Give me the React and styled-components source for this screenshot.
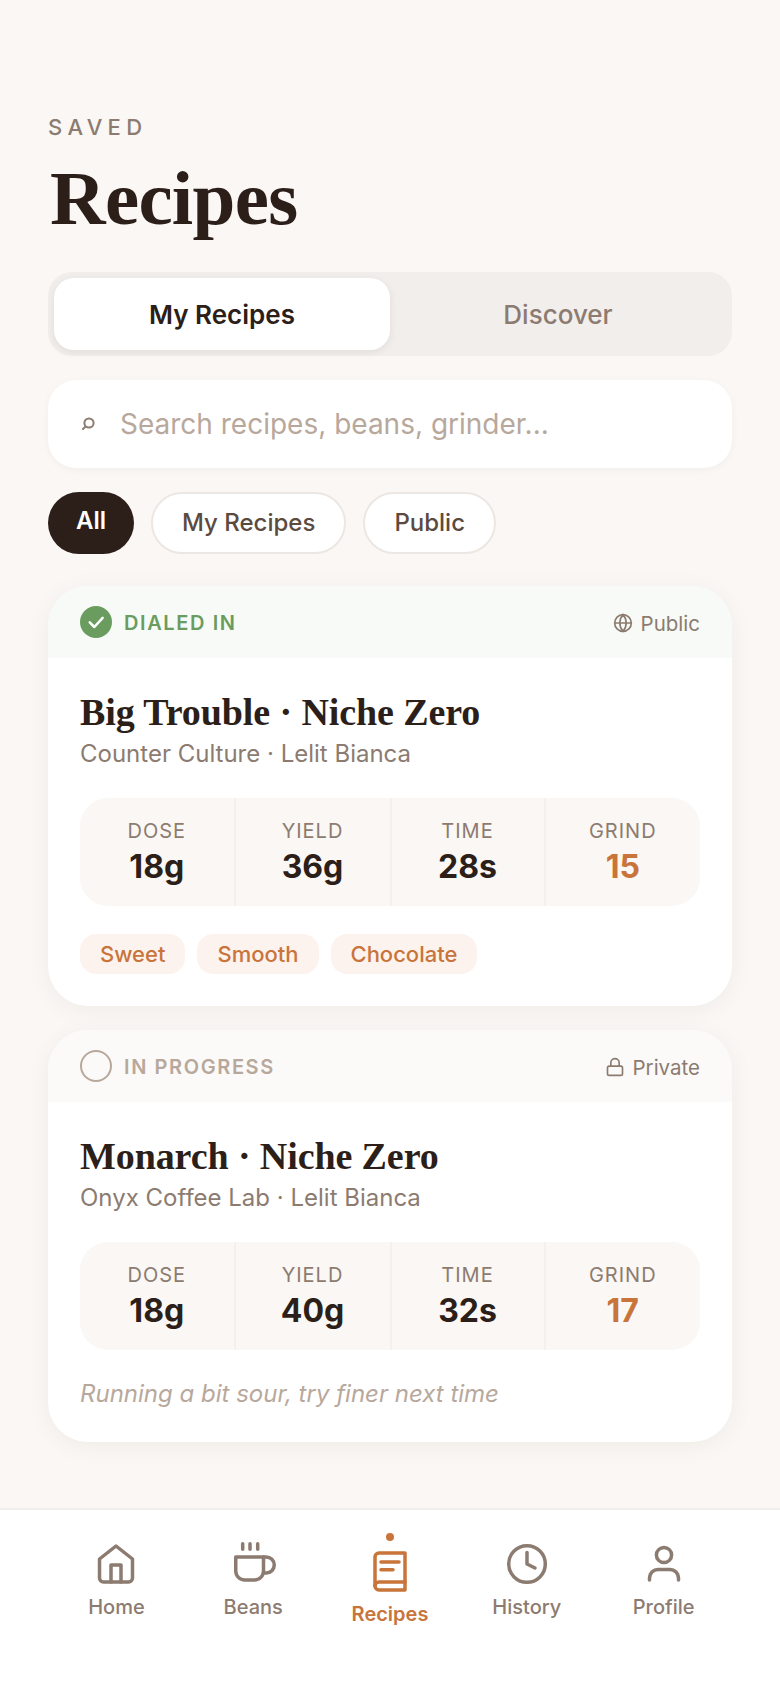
import React from 'react'
import styled, { createGlobalStyle } from 'styled-components'

const dark = '#2c1e18'
const muted = '#8c7b70'
const faint = '#b8a89c'
const accent = '#c8743a'
const green = '#6a9c5f'
const paper = '#faf7f4'

const Global = createGlobalStyle`
  * { box-sizing: border-box; }
  body { margin: 0; background: ${paper}; font-family: Inter, "Liberation Sans", sans-serif; }
`
const Page = styled.div`
  min-height: 100vh;
  display: flex;
  flex-direction: column;
  background: ${paper};
`
const Main = styled.main`
  flex: 1;
  padding: 113px 48px 0;
`
const Eyebrow = styled.div`
  font-size: 22px;
  line-height: 28px;
  font-weight: 500;
  letter-spacing: 5.3px;
  color: ${muted};
`
const PageTitle = styled.h1`
  margin: 13px 0 30px 2px;
  font-family: "Liberation Serif", serif;
  font-size: 77px;
  line-height: 88px;
  font-weight: 700;
  letter-spacing: -0.7px;
  color: ${dark};
`
const Tabs = styled.div`
  display: grid;
  grid-template-columns: 1fr 1fr;
  height: 84px;
  padding: 6px;
  border-radius: 24px;
  background: #f2eeeb;
`
const Tab = styled.div`
  display: flex;
  align-items: center;
  justify-content: center;
  font-size: 26px;
  border-radius: 20px;
  font-weight: ${p => (p.$active ? 600 : 500)};
  color: ${p => (p.$active ? dark : muted)};
  background: ${p => (p.$active ? '#fff' : 'transparent')};
  box-shadow: ${p => (p.$active ? '0 2px 8px rgba(44,30,24,.08)' : 'none')};
`
const Search = styled.div`
  display: flex;
  align-items: center;
  gap: 24px;
  height: 88px;
  margin-top: 24px;
  padding: 0 32px;
  border-radius: 28px;
  background: #fff;
  box-shadow: 0 2px 8px rgba(44,30,24,.04);
`
const SearchInput = styled.input`
  flex: 1;
  min-width: 0;
  border: none;
  outline: none;
  padding: 0;
  background: transparent;
  font-family: inherit;
  font-size: 28px;
  color: ${dark};
  &::placeholder { color: ${faint}; opacity: 1; }
`
const Chips = styled.div`
  display: flex;
  gap: 17px;
  margin: 24px 0 32px;
`
const Chip = styled.div`
  padding: 14px ${p => (p.$active ? '28px' : '29px')};
  border-radius: 32px;
  font-size: 24px;
  line-height: 30px;
  font-weight: ${p => (p.$active ? 600 : 500)};
  color: ${p => (p.$active ? '#fff' : '#5c4a3f')};
  background: ${p => (p.$active ? dark : '#fff')};
  border: ${p => (p.$active ? 'none' : '2px solid #ece7e3')};
`
const Cards = styled.div`
  display: flex;
  flex-direction: column;
  gap: 24px;
`
const Card = styled.article`
  border-radius: 40px;
  background: #fff;
  overflow: hidden;
  box-shadow: 0 4px 24px rgba(44,30,24,.05);
`
const StatusBar = styled.div`
  display: flex;
  align-items: center;
  justify-content: space-between;
  height: 72px;
  padding: 2px 32px 0;
  background: ${p => (p.$done ? '#f7faf6' : '#fbfaf8')};
`
const Status = styled.div`
  display: flex;
  align-items: center;
  gap: 12px;
  font-size: 20px;
  font-weight: 600;
  letter-spacing: 1.6px;
  color: ${p => (p.$done ? green : faint)};
`
const StatusDot = styled.span`
  display: flex;
  align-items: center;
  justify-content: center;
  width: 32px;
  height: 32px;
  margin-top: -2px;
  border-radius: 50%;
  background: ${p => (p.$done ? green : 'transparent')};
  border: ${p => (p.$done ? 'none' : `2px solid ${faint}`)};
`
const Visibility = styled.div`
  display: flex;
  align-items: center;
  gap: 8px;
  font-size: 20.5px;
  color: ${muted};
`
const CardBody = styled.div`
  padding: 31px 32px 32px;
`
const CardTitle = styled.h2`
  margin: 0 0 4px;
  font-family: "Liberation Serif", serif;
  font-size: 38px;
  line-height: 46px;
  font-weight: 700;
  letter-spacing: -0.1px;
  color: ${dark};
`
const Sub = styled.div`
  font-size: 24px;
  line-height: 30px;
  color: ${muted};
`
const Stats = styled.div`
  display: grid;
  grid-template-columns: 155.5px 156px 154px 154.5px;
  margin-top: 29px;
  border-radius: 28px;
  background: ${paper};
`
const Stat = styled.div`
  display: flex;
  flex-direction: column;
  align-items: center;
  gap: 5px;
  padding: 21px 0 20px;
  border-right: 2px solid #f4f0ed;
  &:last-child { border-right: none; }
`
const StatLabel = styled.div`
  font-size: 20px;
  line-height: 24px;
  letter-spacing: 1px;
  color: ${muted};
`
const StatValue = styled.div`
  font-size: 32px;
  line-height: 38px;
  font-weight: 700;
  color: ${p => (p.$accent ? accent : dark)};
`
const Tags = styled.div`
  display: flex;
  gap: 12px;
  margin-top: 28px;
`
const Tag = styled.span`
  height: 40px;
  padding: 0 20px;
  border-radius: 16px;
  font-size: 22px;
  line-height: 41px;
  font-weight: 500;
  color: ${accent};
  background: #fdf3ee;
`
const Note = styled.div`
  margin-top: 28px;
  font-size: 24px;
  line-height: 32px;
  font-style: italic;
  color: ${faint};
`
const Nav = styled.nav`
  display: grid;
  grid-template-columns: repeat(5, 1fr);
  align-items: center;
  height: 180px;
  padding: 0 48px 39px;
  border-top: 2px solid #f2eeeb;
  background: #fff;
`
const NavItem = styled.div`
  display: flex;
  flex-direction: column;
  align-items: center;
  font-size: 20px;
  line-height: 24px;
  font-weight: ${p => (p.$active ? 600 : 450)};
  color: ${p => (p.$active ? accent : muted)};
`
const NavDot = styled.span`
  width: 8px;
  height: 8px;
  margin-bottom: 6px;
  border-radius: 50%;
  background: ${accent};
`
const NavLabel = styled.span`
  margin-top: 7px;
`
const NavSvg = styled.svg.attrs({
  width: 48,
  height: 48,
  viewBox: '0 0 48 48',
  fill: 'none',
  stroke: 'currentColor',
  strokeWidth: 3.5,
  strokeLinecap: 'round',
  strokeLinejoin: 'round',
})`
  display: block;
`
const SmallSvg = styled.svg.attrs({
  viewBox: '0 0 24 24',
  fill: 'none',
  stroke: 'currentColor',
  strokeWidth: 2,
  strokeLinecap: 'round',
  strokeLinejoin: 'round',
})`
  display: block;
  width: 20px;
  height: 20px;
`

const HomeIcon = () => (
  <NavSvg>
    <path d="M7.5 19 24 6l16.5 13v19a4 4 0 0 1-4 4h-25a4 4 0 0 1-4-4z" />
    <path d="M19 42V25h10v17" />
  </NavSvg>
)
const CupIcon = () => (
  <NavSvg>
    <path d="M6.75 17H34.5v14a9 9 0 0 1-9 9h-9.75a9 9 0 0 1-9-9z" />
    <path d="M34.5 17h2.75a8 8 0 0 1 0 16H34.5" />
    <path d="M13.7 3.75v5.5M21 3.75v5.5M28.7 3.75v5.5" />
  </NavSvg>
)
const BookIcon = () => (
  <NavSvg>
    <path d="M9 10a4 4 0 0 1 4-4h26v37H13a4 4 0 0 1-4-4z" />
    <path d="M9 39a4 4 0 0 1 4-4h26" />
    <path d="M15 15h18M15 22.7h12" />
  </NavSvg>
)
const ClockIcon = () => (
  <NavSvg>
    <circle cx="24" cy="24" r="18.3" />
    <path d="M24 12.5V24l8 4" />
  </NavSvg>
)
const UserIcon = () => (
  <NavSvg>
    <circle cx="24" cy="15" r="7.6" />
    <path d="M9.5 40v-2a8.5 8.5 0 0 1 8.5-8.5h12a8.5 8.5 0 0 1 8.5 8.5v2" />
  </NavSvg>
)
const SearchIcon = () => (
  <svg width="16" height="16" viewBox="0 0 16 16" fill="none" stroke={muted} strokeWidth="2" strokeLinecap="round">
    <circle cx="9" cy="7" r="4.6" />
    <path d="M5.6 10.4 3 13" />
  </svg>
)
const GlobeIcon = () => (
  <SmallSvg>
    <circle cx="12" cy="12" r="10" />
    <path d="M2 12h20M12 2a15 15 0 0 1 0 20 15 15 0 0 1 0-20" />
  </SmallSvg>
)
const LockIcon = () => (
  <SmallSvg>
    <rect x="3" y="11" width="18" height="11" rx="2" />
    <path d="M7 11V7a5 5 0 0 1 10 0v4" />
  </SmallSvg>
)
const CheckIcon = () => (
  <svg width="20" height="20" viewBox="0 0 24 24" fill="none" stroke="#fff" strokeWidth="3" strokeLinecap="round" strokeLinejoin="round">
    <path d="M4.5 12.5 10 18 20 7" />
  </svg>
)

const recipes = [
  {
    title: 'Big Trouble · Niche Zero',
    sub: 'Counter Culture · Lelit Bianca',
    done: true,
    status: 'DIALED IN',
    visibility: 'Public',
    stats: ['18g', '36g', '28s', '15'],
    tags: ['Sweet', 'Smooth', 'Chocolate'],
  },
  {
    title: 'Monarch · Niche Zero',
    sub: 'Onyx Coffee Lab · Lelit Bianca',
    done: false,
    status: 'IN PROGRESS',
    visibility: 'Private',
    stats: ['18g', '40g', '32s', '17'],
    note: 'Running a bit sour, try finer next time',
  },
]
const statNames = ['DOSE', 'YIELD', 'TIME', 'GRIND']
const navItems = [
  { label: 'Home', Icon: HomeIcon },
  { label: 'Beans', Icon: CupIcon },
  { label: 'Recipes', Icon: BookIcon, active: true },
  { label: 'History', Icon: ClockIcon },
  { label: 'Profile', Icon: UserIcon },
]

const App = () => {
  return (
    <Page>
      <Global />
      <Main>
        <Eyebrow>SAVED</Eyebrow>
        <PageTitle>Recipes</PageTitle>
        <Tabs>
          <Tab $active>My Recipes</Tab>
          <Tab>Discover</Tab>
        </Tabs>
        <Search>
          <SearchIcon />
          <SearchInput placeholder="Search recipes, beans, grinder..." />
        </Search>
        <Chips>
          <Chip $active>All</Chip>
          <Chip>My Recipes</Chip>
          <Chip>Public</Chip>
        </Chips>
        <Cards>
          {recipes.map(r => (
            <Card key={r.title}>
              <StatusBar $done={r.done}>
                <Status $done={r.done}>
                  <StatusDot $done={r.done}>{r.done && <CheckIcon />}</StatusDot>
                  {r.status}
                </Status>
                <Visibility>
                  {r.done ? <GlobeIcon /> : <LockIcon />}
                  {r.visibility}
                </Visibility>
              </StatusBar>
              <CardBody>
                <CardTitle>{r.title}</CardTitle>
                <Sub>{r.sub}</Sub>
                <Stats>
                  {r.stats.map((v, i) => (
                    <Stat key={statNames[i]}>
                      <StatLabel>{statNames[i]}</StatLabel>
                      <StatValue $accent={i === 3}>{v}</StatValue>
                    </Stat>
                  ))}
                </Stats>
                {r.tags && (
                  <Tags>
                    {r.tags.map(t => <Tag key={t}>{t}</Tag>)}
                  </Tags>
                )}
                {r.note && <Note>{r.note}</Note>}
              </CardBody>
            </Card>
          ))}
        </Cards>
      </Main>
      <Nav>
        {navItems.map(({ label, Icon, active }) => (
          <NavItem key={label} $active={active}>
            {active && <NavDot />}
            <Icon />
            <NavLabel>{label}</NavLabel>
          </NavItem>
        ))}
      </Nav>
    </Page>
  )
}

export default App
